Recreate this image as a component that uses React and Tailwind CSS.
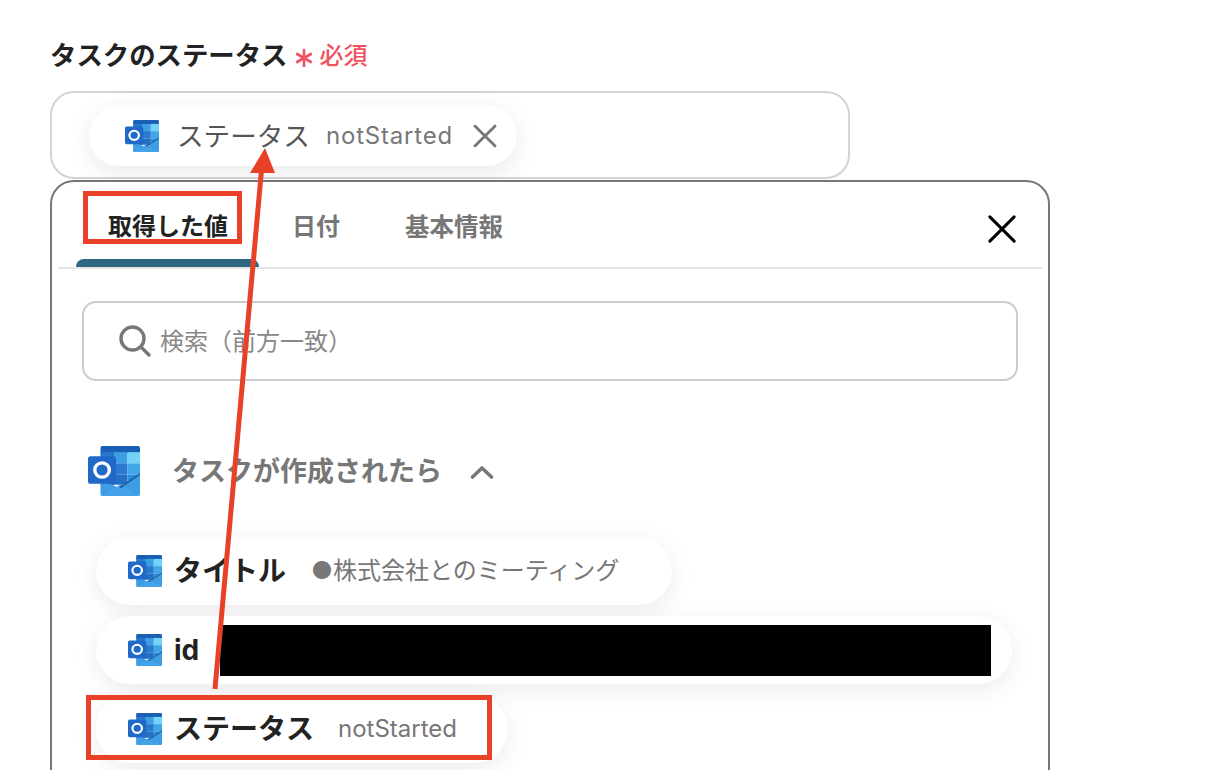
import React from "react";

function Outlook({ className }) {
  return (
    <svg viewBox="0 0 50 49" className={className} preserveAspectRatio="none">
      <path d="M12 2a2 2 0 0 1 2-2H48a2 2 0 0 1 2 2v5H12z" fill="#1b5fb4" />
      <rect x="12" y="6" width="13" height="11" fill="#2776cc" />
      <rect x="25" y="6" width="13" height="11" fill="#3c9fe4" />
      <rect x="38" y="6" width="12" height="11" fill="#72d2f8" />
      <rect x="12" y="17" width="13" height="11" fill="#1b62b8" />
      <rect x="25" y="17" width="13" height="11" fill="#2a7ad0" />
      <rect x="38" y="17" width="12" height="11" fill="#3fa6e8" />
      <rect x="12" y="28" width="13" height="10" fill="#17559f" />
      <rect x="25" y="28" width="13" height="10" fill="#2470c4" />
      <rect x="38" y="28" width="12" height="6" fill="#2f8fdc" />
      <path d="M12 32 L31 42 L50 27 V47a2 2 0 0 1-2 2H14a2 2 0 0 1-2-2z" fill="#3c9ce4" />
      <path d="M12 49 L31 38 L50 49z" fill="#44a3e8" />
      <path d="M30 40 L50 26.5 V28.5 L31.5 41.5z" fill="#1b5fa8" />
      <rect x="0" y="10" width="27" height="27" rx="2.5" fill="#2069c8" />
      <circle cx="13.5" cy="23.5" r="7" fill="none" stroke="#fff" strokeWidth="3.2" />
    </svg>
  );
}

function Chip({ className = "", children }) {
  return (
    <div
      className={`flex items-center h-[68px] rounded-full bg-white shadow-[0_6px_24px_rgba(0,0,0,0.08)] pl-[32px] ${className}`}
    >
      <Outlook className="w-[34px] h-[32px] shrink-0" />
      {children}
    </div>
  );
}

export default function App() {
  return (
    <div
      className="relative w-[1216px] h-[770px] overflow-hidden bg-white pl-[50px] pt-[36px] text-[#222]"
      style={{ fontFamily: '"Inter","Noto Sans CJK JP",sans-serif' }}
    >
      <div className="flex items-center h-[38px]">
        <span className="-mt-px text-[26.4px] font-bold leading-[38px] text-[#222]">タスクのステータス</span>
        <svg viewBox="0 0 18 18" className="ml-[7px] mt-[6px] w-[18px] h-[18px]" fill="none" stroke="#f0525f" strokeWidth="2.6">
          <path d="M9 0 V18 M1.2 4.5 L16.8 13.5 M16.8 4.5 L1.2 13.5" />
        </svg>
        <span className="ml-[7px] mt-[2px] text-[24px] leading-[30px] font-medium text-[#f0525f]">必須</span>
      </div>

      <div className="mt-[17px] w-[800px] h-[88px] rounded-[24px] border-2 border-[#d0d4da] bg-white pl-[37px] pt-[12px]">
        <div className="flex items-center w-[428px] h-[61px] rounded-full bg-white shadow-[0_6px_24px_rgba(0,0,0,0.09)] pl-[36px]">
          <Outlook className="w-[34px] h-[32px] shrink-0" />
          <span className="ml-[18px] text-[26.6px] leading-[36px] text-[#555]">ステータス</span>
          <span className="ml-[16px] text-[24px] leading-[36px] tracking-[0.8px] text-[#777]">notStarted</span>
          <svg viewBox="0 0 24 24" className="ml-[19px] w-[26px] h-[26px]" fill="none" stroke="#777" strokeWidth="2.6">
            <path d="M2 2 L22 22 M22 2 L2 22" />
          </svg>
        </div>
      </div>

      <div className="mt-px w-[1000px] h-[700px] rounded-[24px] border-2 border-[#777] bg-white">
        <div className="relative mx-[6px] h-[87px] border-b-2 border-[#e5e5e5]">
          <div className="flex pl-[50px] pt-[28px] text-[24px] leading-[34px] font-semibold">
            <span className="text-[#222]">取得した値</span>
            <span className="ml-[64px] text-[#777]">日付</span>
            <span className="ml-[65px] text-[24.5px] text-[#777]">基本情報</span>
          </div>
          <div className="absolute left-[18px] bottom-0 w-[183px] h-[8px] rounded-t-[8px] bg-[#2d6880]" />
          <svg viewBox="0 0 30 30" className="absolute left-[930px] top-[33px] w-[28px] h-[28px]" fill="none" stroke="#000" strokeWidth="3.2" strokeLinecap="round">
            <path d="M2 2 L28 28 M28 2 L2 28" />
          </svg>
        </div>

        <div className="pl-[30px]">
          <div className="mt-[32px] flex items-center w-[936px] h-[80px] rounded-[14px] border-2 border-[#ccc] pl-[34px]">
            <svg viewBox="0 0 34 34" className="w-[34px] h-[34px]" fill="none" stroke="#777" strokeWidth="3.4" strokeLinecap="round">
              <circle cx="14.5" cy="14.5" r="11.5" />
              <path d="M23 23 L31 31" />
            </svg>
            <span className="ml-[8px] mt-px text-[24px] leading-[32px] text-[#888]">検索（前方一致）</span>
          </div>

          <div className="mt-[64px] flex items-center h-[52px] pl-[6px]">
            <Outlook className="w-[52px] h-[50px] shrink-0" />
            <span className="ml-[32px] mt-px text-[27px] leading-[40px] font-bold text-[#777]">タスクが作成されたら</span>
            <svg viewBox="0 0 24 14" className="ml-[28px] mt-[2px] w-[24px] h-[14px]" fill="none" stroke="#777" strokeWidth="3.6" strokeLinecap="round" strokeLinejoin="round">
              <path d="M2.5 12 L12 3 L21.5 12" />
            </svg>
          </div>

          <div className="mt-[40px] ml-[14px] flex flex-col gap-[11px] items-start">
            <Chip className="w-[576px]">
              <span className="ml-[12px] text-[28px] leading-[36px] font-bold text-[#222]">タイトル</span>
              <span className="ml-[25px] text-[24px] leading-[36px] text-[#777]">●株式会社とのミーティング</span>
            </Chip>
            <Chip className="w-[916px]">
              <span className="ml-[12px] text-[28px] leading-[36px] font-bold text-[#222]">id</span>
              <div className="ml-[21px] w-[771px] h-[51px] bg-black" />
            </Chip>
            <Chip className="w-[412px]">
              <span className="ml-[12px] text-[28px] leading-[36px] font-bold text-[#222]">ステータス</span>
              <span className="ml-[24px] text-[24px] leading-[36px] text-[#777]">notStarted</span>
            </Chip>
          </div>
        </div>
      </div>

      <svg viewBox="0 0 1216 770" className="absolute left-0 top-0 w-[1216px] h-[770px] pointer-events-none">
        <rect x="85.5" y="193.5" width="154" height="48" fill="none" stroke="#e94128" strokeWidth="5" />
        <rect x="88.5" y="697.5" width="401" height="60" fill="none" stroke="#e94128" strokeWidth="5" />
        <path d="M215 689 L261.5 170" stroke="#e94128" strokeWidth="5" fill="none" />
        <path d="M265 148 L250 173 L275 173z" fill="#e94128" />
      </svg>
    </div>
  );
}
